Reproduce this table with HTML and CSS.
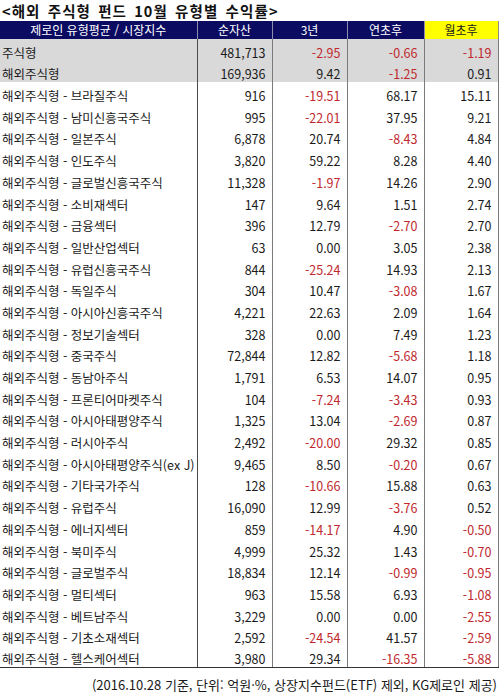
FILE: index.html
```html
<!DOCTYPE html>
<html lang="ko">
<head>
<meta charset="utf-8">
<link rel="stylesheet" href="styles.css">
</head>
<body>
<div class="page">
  <h1 class="title">&lt;해외 주식형 펀드 10월 유형별 수익률&gt;</h1>
  <table class="fund">
    <colgroup>
      <col class="c-name"><col class="c-asset"><col class="c-3y"><col class="c-ytd"><col class="c-mtd">
    </colgroup>
    <thead>
      <tr>
        <th>제로인 유형평균 / 시장지수</th>
        <th>순자산</th>
        <th>3년</th>
        <th>연초후</th>
        <th class="hl">월초후</th>
      </tr>
    </thead>
    <tbody>
      <tr class="gray"><td>주식형</td><td>481,713</td><td class="neg">-2.95</td><td class="neg">-0.66</td><td class="neg">-1.19</td></tr>
      <tr class="gray"><td>해외주식형</td><td>169,936</td><td>9.42</td><td class="neg">-1.25</td><td>0.91</td></tr>
      <tr><td>해외주식형 - 브라질주식</td><td>916</td><td class="neg">-19.51</td><td>68.17</td><td>15.11</td></tr>
      <tr><td>해외주식형 - 남미신흥국주식</td><td>995</td><td class="neg">-22.01</td><td>37.95</td><td>9.21</td></tr>
      <tr><td>해외주식형 - 일본주식</td><td>6,878</td><td>20.74</td><td class="neg">-8.43</td><td>4.84</td></tr>
      <tr><td>해외주식형 - 인도주식</td><td>3,820</td><td>59.22</td><td>8.28</td><td>4.40</td></tr>
      <tr><td>해외주식형 - 글로벌신흥국주식</td><td>11,328</td><td class="neg">-1.97</td><td>14.26</td><td>2.90</td></tr>
      <tr><td>해외주식형 - 소비재섹터</td><td>147</td><td>9.64</td><td>1.51</td><td>2.74</td></tr>
      <tr><td>해외주식형 - 금융섹터</td><td>396</td><td>12.79</td><td class="neg">-2.70</td><td>2.70</td></tr>
      <tr><td>해외주식형 - 일반산업섹터</td><td>63</td><td>0.00</td><td>3.05</td><td>2.38</td></tr>
      <tr><td>해외주식형 - 유럽신흥국주식</td><td>844</td><td class="neg">-25.24</td><td>14.93</td><td>2.13</td></tr>
      <tr><td>해외주식형 - 독일주식</td><td>304</td><td>10.47</td><td class="neg">-3.08</td><td>1.67</td></tr>
      <tr><td>해외주식형 - 아시아신흥국주식</td><td>4,221</td><td>22.63</td><td>2.09</td><td>1.64</td></tr>
      <tr><td>해외주식형 - 정보기술섹터</td><td>328</td><td>0.00</td><td>7.49</td><td>1.23</td></tr>
      <tr><td>해외주식형 - 중국주식</td><td>72,844</td><td>12.82</td><td class="neg">-5.68</td><td>1.18</td></tr>
      <tr><td>해외주식형 - 동남아주식</td><td>1,791</td><td>6.53</td><td>14.07</td><td>0.95</td></tr>
      <tr><td>해외주식형 - 프론티어마켓주식</td><td>104</td><td class="neg">-7.24</td><td class="neg">-3.43</td><td>0.93</td></tr>
      <tr><td>해외주식형 - 아시아태평양주식</td><td>1,325</td><td>13.04</td><td class="neg">-2.69</td><td>0.87</td></tr>
      <tr><td>해외주식형 - 러시아주식</td><td>2,492</td><td class="neg">-20.00</td><td>29.32</td><td>0.85</td></tr>
      <tr><td>해외주식형 - 아시아태평양주식(ex J)</td><td>9,465</td><td>8.50</td><td class="neg">-0.20</td><td>0.67</td></tr>
      <tr><td>해외주식형 - 기타국가주식</td><td>128</td><td class="neg">-10.66</td><td>15.88</td><td>0.63</td></tr>
      <tr><td>해외주식형 - 유럽주식</td><td>16,090</td><td>12.99</td><td class="neg">-3.76</td><td>0.52</td></tr>
      <tr><td>해외주식형 - 에너지섹터</td><td>859</td><td class="neg">-14.17</td><td>4.90</td><td class="neg">-0.50</td></tr>
      <tr><td>해외주식형 - 북미주식</td><td>4,999</td><td>25.32</td><td>1.43</td><td class="neg">-0.70</td></tr>
      <tr><td>해외주식형 - 글로벌주식</td><td>18,834</td><td>12.14</td><td class="neg">-0.99</td><td class="neg">-0.95</td></tr>
      <tr><td>해외주식형 - 멀티섹터</td><td>963</td><td>15.58</td><td>6.93</td><td class="neg">-1.08</td></tr>
      <tr><td>해외주식형 - 베트남주식</td><td>3,229</td><td>0.00</td><td>0.00</td><td class="neg">-2.55</td></tr>
      <tr><td>해외주식형 - 기초소재섹터</td><td>2,592</td><td class="neg">-24.54</td><td>41.57</td><td class="neg">-2.59</td></tr>
      <tr><td>해외주식형 - 헬스케어섹터</td><td>3,980</td><td>29.34</td><td class="neg">-16.35</td><td class="neg">-5.88</td></tr>
    </tbody>
  </table>
  <p class="note">(2016.10.28 기준, 단위: 억원·%, 상장지수펀드(ETF) 제외, KG제로인 제공)</p>
</div>
</body>
</html>
```

FILE: styles.css
```css
html, body {
  margin: 0;
  padding: 0;
  background: #ffffff;
}

.page {
  width: 499px;
  font-family: "Noto Sans CJK KR", "Noto Sans", sans-serif;
  color: #1a1a1a;
}

.title {
  margin: 0;
  height: 21px;
  padding-left: 2px;
  font-size: 14.5px;
  line-height: 21px;
  letter-spacing: 1.1px;
  word-spacing: 2px;
  font-weight: 700;
  color: #111;
  white-space: nowrap;
}

.fund {
  width: 498px;
  border-collapse: collapse;
  table-layout: fixed;
  font-size: 12.5px;
}

.c-name { width: 197px; }
.c-asset { width: 75px; }
.c-3y { width: 75px; }
.c-ytd { width: 77px; }
.c-mtd { width: 74px; }

.fund th {
  height: 18px;
  padding: 0;
  background: #0b0b62;
  color: #ffffff;
  font-weight: 400;
  font-size: 12px;
  line-height: 18px;
  text-align: center;
  border-left: 1px solid #8d8db0;
}

.fund th:first-child {
  border-left: none;
}

.fund th.hl {
  background: #ffff00;
  color: #1a1a1a;
  border-right: 1px solid #8d8d8d;
}

.fund td {
  height: 21.7px;
  padding: 0 6px 1px 0;
  box-sizing: border-box;
  line-height: 15px;
  vertical-align: bottom;
  text-align: right;
  white-space: nowrap;
  border-left: 1px solid #7a7a7a;
}

.fund td:first-child {
  text-align: left;
  padding: 0 0 1px 2px;
  border-left: none;
}

.fund td:nth-child(2) {
  border-left-color: #4a4a4a;
}

.fund td:last-child {
  border-right: 1px solid #7a7a7a;
}

.fund td.neg {
  color: #c0282d;
}

.fund tr.gray td {
  background: #d9d9d9;
}

.fund tbody tr:last-child td {
  border-bottom: 1px solid #333333;
}

.note {
  margin: 0;
  width: 497px;
  padding-top: 8px;
  font-size: 13px;
  line-height: 17px;
  text-align: right;
  color: #1a1a1a;
  white-space: nowrap;
}
```
